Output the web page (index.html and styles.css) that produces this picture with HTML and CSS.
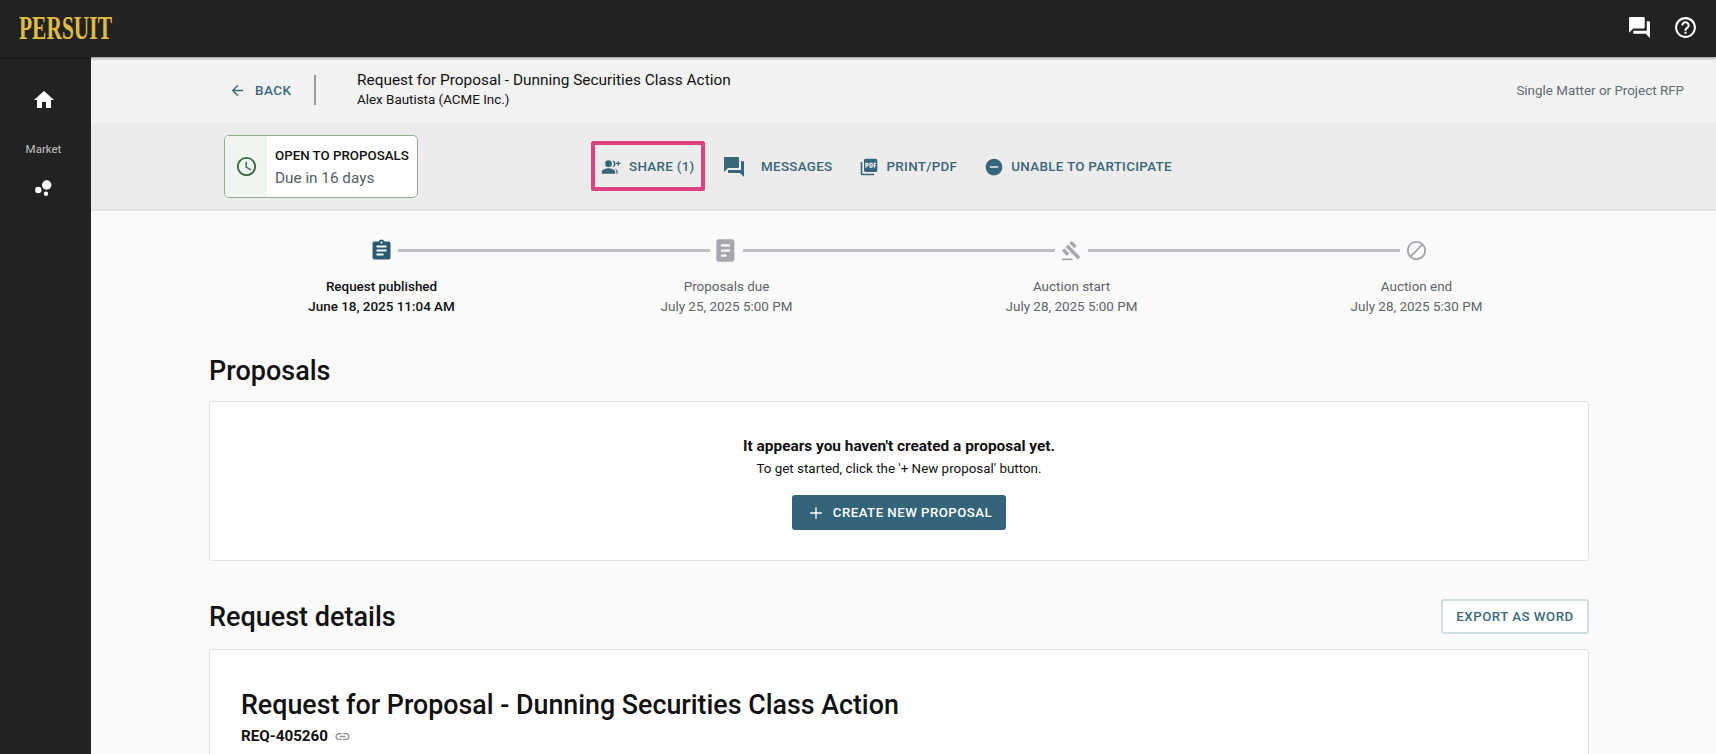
FILE: index.html
```html
<!DOCTYPE html>
<html lang="en">
<head>
<meta charset="utf-8">
<title>Persuit - Request for Proposal</title>
<link rel="stylesheet" href="styles.css">
</head>
<body>
<header class="topbar">
  <div class="logo"><span class="logo-text">PERSUIT</span></div>
  <div class="top-actions">
    <svg class="top-icon" viewBox="0 0 24 24"><path d="M21 6h-2v9H6v2c0 .55.45 1 1 1h11l4 4V7c0-.55-.45-1-1-1zm-4 6V3c0-.55-.45-1-1-1H3c-.55 0-1 .45-1 1v14l4-4h10c.55 0 1-.45 1-1z"/></svg>
    <svg class="top-icon" viewBox="0 0 24 24"><path d="M11 18h2v-2h-2v2zm1-16C6.48 2 2 6.48 2 12s4.48 10 10 10 10-4.48 10-10S17.52 2 12 2zm0 18c-4.41 0-8-3.59-8-8s3.59-8 8-8 8 3.59 8 8-3.59 8-8 8zm0-14c-2.21 0-4 1.79-4 4h2c0-1.1.9-2 2-2s2 .9 2 2c0 2-3 1.75-3 5h2c0-2.25 3-2.5 3-5 0-2.21-1.79-4-4-4z"/></svg>
  </div>
</header>
<div class="shell">
  <nav class="sidebar">
    <svg class="side-home" viewBox="0 0 24 24"><path d="M10 20v-6h4v6h5v-8h3L12 3 2 12h3v8z"/></svg>
    <span class="side-label">Market</span>
    <svg class="side-market" viewBox="0 0 22 22"><circle cx="13.7" cy="9" r="4.7"/><circle cx="5.3" cy="14" r="3.2"/><circle cx="13" cy="17.7" r="2.2"/></svg>
  </nav>
  <main class="main">
    <section class="head-row">
      <a class="back">
        <svg class="back-icon" viewBox="0 0 24 24"><path d="M20 11H7.83l5.59-5.59L12 4l-8 8 8 8 1.41-1.41L7.83 13H20v-2z"/></svg>
        <span>BACK</span>
      </a>
      <span class="divider"></span>
      <div class="head-titles">
        <div class="head-title">Request for Proposal - Dunning Securities Class Action</div>
        <div class="head-sub">Alex Bautista (ACME Inc.)</div>
      </div>
      <div class="head-type">Single Matter or Project RFP</div>
    </section>
    <section class="action-row">
      <div class="status">
        <div class="status-icon">
          <svg class="clock" viewBox="0 0 24 24"><path d="M11.99 2C6.47 2 2 6.48 2 12s4.47 10 9.99 10C17.52 22 22 17.52 22 12S17.52 2 11.99 2zM12 20c-4.42 0-8-3.58-8-8s3.58-8 8-8 8 3.58 8 8-3.58 8-8 8zm.5-13H11v6l5.25 3.15.75-1.23-4.5-2.67z"/></svg>
        </div>
        <div class="status-text">
          <div class="status-title">OPEN TO PROPOSALS</div>
          <div class="status-due">Due in 16 days</div>
        </div>
      </div>
      <div class="actions">
        <a class="action action-share">
          <svg class="action-icon" viewBox="0 0 24 24"><path d="M9 12a4 4 0 1 0 0-8 4 4 0 0 0 0 8zM1 20v-2.2c0-2.8 5-4.3 8-4.3s8 1.500 8 4.300V20zM13.600 4.200a4.800 4.800 0 0 1 0 7.600 3.800 3.800 0 0 0 0-7.600zM16.500 13.700c1.900.5 3.500 1.800 3.500 4V20h-1.500v-2.300c0-1.600-.8-2.900-2-4zM20 7V5h1.500v2h2v1.500h-2v2H20v-2h-2V7z"/></svg>
          <span>SHARE (1)</span>
        </a>
        <a class="action action-messages">
          <svg class="action-icon-lg" viewBox="0 0 24 24"><path d="M21 6h-2v9H6v2c0 .55.45 1 1 1h11l4 4V7c0-.55-.45-1-1-1zm-4 6V3c0-.55-.45-1-1-1H3c-.55 0-1 .45-1 1v14l4-4h10c.55 0 1-.45 1-1z"/></svg>
          <span>MESSAGES</span>
        </a>
        <a class="action action-print">
          <svg class="action-icon" viewBox="0 0 24 24"><path d="M20 2H8c-1.1 0-2 .9-2 2v12c0 1.1.9 2 2 2h12c1.1 0 2-.9 2-2V4c0-1.1-.9-2-2-2zm-8.5 7.5c0 .83-.67 1.5-1.5 1.5H9v2H7.5V7H10c.83 0 1.5.67 1.5 1.5v1zm5 2c0 .83-.67 1.5-1.5 1.5h-2.5V7H15c.83 0 1.5.67 1.5 1.5v3zm4-3H19v1h1.5V11H19v2h-1.5V7h3v1.5zM9 9.5h1v-1H9v1zM4 6H2v14c0 1.1.9 2 2 2h14v-2H4V6zm10 5.5h1v-3h-1v3z"/></svg>
          <span>PRINT/PDF</span>
        </a>
        <a class="action action-unable">
          <svg class="action-icon" viewBox="0 0 24 24"><path d="M12 2C6.48 2 2 6.48 2 12s4.48 10 10 10 10-4.48 10-10S17.52 2 12 2zm5 11H7v-2h10v2z"/></svg>
          <span>UNABLE TO PARTICIPATE</span>
        </a>
      </div>
    </section>
    <div class="content">
      <div class="track">
        <svg class="step-icon step-assign" viewBox="0 0 24 24"><path d="M19 3h-4.180C14.400 1.840 13.300 1 12 1c-1.300 0-2.400.84-2.820 2H5c-1.100 0-2 .9-2 2v14c0 1.100.9 2 2 2h14c1.100 0 2-.9 2-2V5c0-1.100-.9-2-2-2zm-7 0c.55 0 1 .45 1 1s-.45 1-1 1-1-.45-1-1 .45-1 1-1zm2 14H7v-2h7v2zm3-4H7v-2h10v2zm0-4H7V7h10v2z"/></svg>
        <span class="track-line"></span>
        <svg class="step-icon step-doc" viewBox="1 0 24 24"><path fill-rule="evenodd" d="M18 2H6c-1.100 0-2 .9-2 2v16c0 1.100.9 2 2 2h12c1.100 0 2-.9 2-2V4c0-1.100-.9-2-2-2zM8 6.500h8v2H8zM8 11h8v2H8zM8 15.500h5v2H8z"/></svg>
        <span class="track-line"></span>
        <svg class="step-icon step-gavel" viewBox="0 0 24 24"><path d="M1 21h12v2H1zM5.245 8.070l2.830-2.827 14.140 14.142-2.828 2.828zM12.317 1l5.657 5.656-2.830 2.830-5.654-5.660zM3.825 9.485l5.657 5.657-2.828 2.828-5.657-5.657z"/></svg>
        <span class="track-line"></span>
        <svg class="step-icon step-block" viewBox="0 0 24 24"><path d="M12 2C6.480 2 2 6.480 2 12s4.480 10 10 10 10-4.480 10-10S17.520 2 12 2zM4 12c0-4.420 3.580-8 8-8 1.850 0 3.550.63 4.900 1.690L5.690 16.900C4.630 15.550 4 13.850 4 12zm8 8c-1.850 0-3.550-.63-4.900-1.690L18.310 7.100C19.370 8.450 20 10.150 20 12c0 4.420-3.580 8-8 8z"/></svg>
      </div>
      <div class="steps">
        <div class="step step-active"><div>Request published</div><div>June 18, 2025 11:04 AM</div></div>
        <div class="step"><div>Proposals due</div><div>July 25, 2025 5:00 PM</div></div>
        <div class="step"><div>Auction start</div><div>July 28, 2025 5:00 PM</div></div>
        <div class="step"><div>Auction end</div><div>July 28, 2025 5:30 PM</div></div>
      </div>
      <h2 class="section-title proposals-title">Proposals</h2>
      <div class="card empty-card">
        <div class="empty-title">It appears you haven't created a proposal yet.</div>
        <div class="empty-sub">To get started, click the '+ New proposal' button.</div>
        <a class="create-btn">
          <svg class="plus" viewBox="0 0 24 24"><path d="M19 12.800h-6.200V19h-1.600v-6.200H5v-1.600h6.200V5h1.600v6.200H19z"/></svg>
          <span>CREATE NEW PROPOSAL</span>
        </a>
      </div>
      <div class="details-head">
        <h2 class="section-title">Request details</h2>
        <a class="export-btn">EXPORT AS WORD</a>
      </div>
      <div class="card details-card">
        <h1 class="details-title">Request for Proposal - Dunning Securities Class Action</h1>
        <div class="req-id">
          <span>REQ-405260</span>
          <svg class="link-icon" viewBox="0 0 24 24"><path d="M3.9 12c0-1.71 1.39-3.1 3.1-3.1h4V7H7c-2.76 0-5 2.24-5 5s2.24 5 5 5h4v-1.9H7c-1.71 0-3.1-1.39-3.1-3.1zM8 13h8v-2H8v2zm9-6h-4v1.9h4c1.71 0 3.1 1.39 3.1 3.1s-1.39 3.1-3.1 3.1h-4V17h4c2.76 0 5-2.24 5-5s-2.24-5-5-5z"/></svg>
        </div>
      </div>
    </div>
  </main>
</div>
</body>
</html>
```
FILE: styles.css
```css
* { box-sizing: border-box; }
html, body { margin: 0; height: 754px; overflow: hidden; }
body { font-family: Roboto, "Liberation Sans", sans-serif; background: #fafafa; color: #111; }
svg { display: block; fill: currentColor; flex: none; }

.topbar { height: 57px; background: #222222; display: flex; align-items: center; justify-content: space-between; padding: 0 18px 3px 19px; position: relative; z-index: 2; box-shadow: 0 1px 3px rgba(0,0,0,.45); }
.logo { width: 93px; height: 30px; margin-top: 1px; }
.logo-text { display: block; font-family: "Liberation Serif", serif; font-weight: 700; font-size: 33.5px; line-height: 30px; color: #e0bc40; transform: scaleX(.64); transform-origin: left center; white-space: nowrap; }
.top-actions { display: flex; align-items: center; gap: 21px; color: #fff; }
.top-icon { width: 25px; height: 25px; }

.shell { display: flex; height: 697px; }
.sidebar { width: 91px; background: #222222; color: #fff; display: flex; flex-direction: column; align-items: center; flex: none; padding: 31px 4px 0 0; }
.side-home { width: 24px; height: 24px; }
.side-label { font-size: 11.5px; color: #c4c4c4; margin-top: 29px; line-height: 16px; }
.side-market { width: 22px; height: 22px; margin-top: 19px; }

.main { flex: 1; min-width: 0; overflow: hidden; }
.head-row { height: 67px; background: #f2f2f2; border-bottom: 1px solid #ebebeb; display: flex; align-items: center; padding: 0 32px 0 138px; }
.back { display: flex; align-items: center; gap: 9px; color: #3a6a80; font-size: 13.5px; font-weight: 500; letter-spacing: .4px; width: 85px; }
.back-icon { width: 17px; height: 17px; }
.divider { width: 2px; height: 30px; background: #999; }
.head-titles { margin: 0 0 2px 41px; flex: 1; }
.head-title { font-size: 15.4px; line-height: 20px; color: #111; }
.head-sub { font-size: 13.4px; line-height: 19px; color: #111; }
.head-type { font-size: 13.4px; color: #5f6b72; }

.action-row { height: 87px; background: #ececec; border-bottom: 2px solid #e4e4e4; display: flex; align-items: center; padding: 0 0 0 133px; }
.status { width: 194px; height: 63px; border: 1px solid #8fb090; border-radius: 5px; background: #fff; display: flex; overflow: hidden; }
.status-icon { width: 42px; background: #eff6f0; display: flex; align-items: center; justify-content: center; color: #3e6b47; }
.clock { width: 23px; height: 23px; }
.status-text { padding: 10px 0 0 8px; }
.status-title { font-size: 13.3px; font-weight: 500; line-height: 20px; color: #111; white-space: nowrap; }
.status-due { font-size: 15.3px; line-height: 25px; color: #555d62; white-space: nowrap; }

.actions { display: flex; align-items: center; margin-left: 173px; }
.action { display: flex; align-items: center; color: #376679; font-size: 13.4px; font-weight: 500; letter-spacing: .3px; white-space: nowrap; }
.action-share { width: 114px; height: 50px; border: 4px solid #dd4283; border-radius: 2px; padding: 2px 0 0 6px; gap: 8px; margin-bottom: 2px; }
.action-messages { margin-left: 17px; gap: 15px; }
.action-print { margin-left: 27px; gap: 7px; }
.action-unable { margin-left: 27px; gap: 7px; }
.action-icon { width: 20px; height: 20px; }
.action-icon-lg { width: 24px; height: 24px; }

.content { width: 1380px; margin-left: 118px; }
.track { display: flex; align-items: center; padding: 0 156px; margin-top: 23px; height: 33px; color: #a6a6ae; }
.step-icon { width: 33px; height: 33px; }
.step-assign { padding: 4.5px; color: #2b5a70; }
.step-doc { padding: 3px; }
.step-gavel { padding: 6px; }
.step-block { padding: 5px; }
.track-line { flex: 1; height: 3px; background: #bfbfc6; }
.steps { display: grid; grid-template-columns: repeat(4, 1fr); margin-top: 10px; }
.step { text-align: center; font-size: 13.45px; line-height: 19.5px; color: #5f6468; }
.step-active { color: #111; font-weight: 500; }

.section-title { margin: 0; font-size: 27px; font-weight: 500; line-height: 32px; color: #111; }
.proposals-title { margin-top: 39px; }
.card { background: #fff; border: 1px solid #dfe3e6; border-radius: 3px; }
.empty-card { margin-top: 14px; height: 160px; display: flex; flex-direction: column; align-items: center; padding-top: 34px; }
.empty-title { font-size: 15.4px; font-weight: 700; line-height: 20px; }
.empty-sub { font-size: 13.4px; line-height: 20px; margin-top: 3px; }
.create-btn { margin-top: 16px; width: 214px; height: 35px; background: #33647a; color: #fff; border-radius: 3px; display: flex; align-items: center; justify-content: center; gap: 7px; font-size: 13.2px; font-weight: 500; letter-spacing: .5px; }
.plus { width: 20px; height: 20px; }
.details-head { display: flex; align-items: center; justify-content: space-between; margin-top: 38px; height: 35px; }
.export-btn { width: 148px; height: 35px; background: #fff; border: 2px solid #cfdde4; border-radius: 3px; display: flex; align-items: center; justify-content: center; color: #3a6a80; font-size: 13.25px; font-weight: 500; letter-spacing: .5px; }
.details-card { margin-top: 15px; height: 200px; padding: 39px 30px 0 31px; }
.details-title { margin: 0; font-size: 26.8px; font-weight: 500; line-height: 32px; color: #111; }
.req-id { display: flex; align-items: center; gap: 6px; font-size: 15.2px; font-weight: 700; margin-top: 5px; line-height: 20px; }
.link-icon { width: 17px; height: 17px; color: #8a8f93; }
```
